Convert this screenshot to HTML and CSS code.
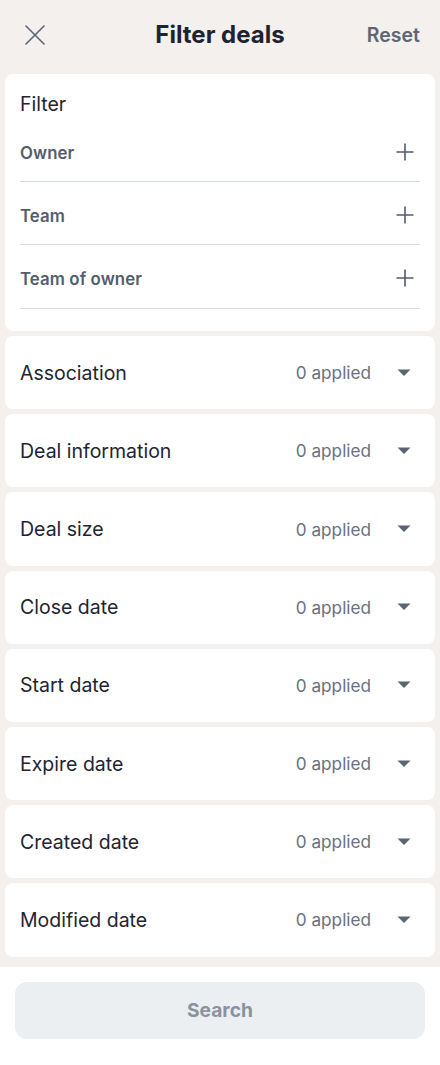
FILE: index.html
```html
<!DOCTYPE html>
<html lang="en">
<head>
<meta charset="utf-8">
<title>Filter deals</title>
<link rel="stylesheet" href="styles.css">
</head>
<body>
<div class="screen">
  <header class="topbar">
    <button class="icon-btn close" aria-label="Close">
      <svg width="20" height="20" viewBox="0 0 20 20"><path d="M1 1L19 19M19 1L1 19" stroke="#5b6472" stroke-width="1.6" stroke-linecap="round" fill="none"/></svg>
    </button>
    <h1 class="title">Filter deals</h1>
    <button class="reset">Reset</button>
  </header>

  <main class="content">
    <section class="card filter-card">
      <div class="filter-label">Filter</div>
      <div class="filter-row"><span>Owner</span><svg class="plus" width="18" height="18" viewBox="0 0 18 18"><path d="M9 0.5V17.5M0.5 9H17.5" stroke="#535c6b" stroke-width="1.6" fill="none"/></svg></div>
      <div class="filter-row"><span>Team</span><svg class="plus" width="18" height="18" viewBox="0 0 18 18"><path d="M9 0.5V17.5M0.5 9H17.5" stroke="#535c6b" stroke-width="1.6" fill="none"/></svg></div>
      <div class="filter-row"><span>Team of owner</span><svg class="plus" width="18" height="18" viewBox="0 0 18 18"><path d="M9 0.5V17.5M0.5 9H17.5" stroke="#535c6b" stroke-width="1.6" fill="none"/></svg></div>
    </section>

    <section class="card acc-row"><span class="acc-title">Association</span><span class="acc-count">0 applied</span><svg class="caret" width="14" height="8" viewBox="0 0 14 8"><path d="M0.5 0.5H13.5L7 7Z" fill="#5b6472"/></svg></section>
    <section class="card acc-row"><span class="acc-title">Deal information</span><span class="acc-count">0 applied</span><svg class="caret" width="14" height="8" viewBox="0 0 14 8"><path d="M0.5 0.5H13.5L7 7Z" fill="#5b6472"/></svg></section>
    <section class="card acc-row"><span class="acc-title">Deal size</span><span class="acc-count">0 applied</span><svg class="caret" width="14" height="8" viewBox="0 0 14 8"><path d="M0.5 0.5H13.5L7 7Z" fill="#5b6472"/></svg></section>
    <section class="card acc-row"><span class="acc-title">Close date</span><span class="acc-count">0 applied</span><svg class="caret" width="14" height="8" viewBox="0 0 14 8"><path d="M0.5 0.5H13.5L7 7Z" fill="#5b6472"/></svg></section>
    <section class="card acc-row"><span class="acc-title">Start date</span><span class="acc-count">0 applied</span><svg class="caret" width="14" height="8" viewBox="0 0 14 8"><path d="M0.5 0.5H13.5L7 7Z" fill="#5b6472"/></svg></section>
    <section class="card acc-row"><span class="acc-title">Expire date</span><span class="acc-count">0 applied</span><svg class="caret" width="14" height="8" viewBox="0 0 14 8"><path d="M0.5 0.5H13.5L7 7Z" fill="#5b6472"/></svg></section>
    <section class="card acc-row"><span class="acc-title">Created date</span><span class="acc-count">0 applied</span><svg class="caret" width="14" height="8" viewBox="0 0 14 8"><path d="M0.5 0.5H13.5L7 7Z" fill="#5b6472"/></svg></section>
    <section class="card acc-row"><span class="acc-title">Modified date</span><span class="acc-count">0 applied</span><svg class="caret" width="14" height="8" viewBox="0 0 14 8"><path d="M0.5 0.5H13.5L7 7Z" fill="#5b6472"/></svg></section>
  </main>

  <footer class="footer">
    <button class="search-btn">Search</button>
  </footer>
</div>
</body>
</html>
```

FILE: styles.css
```css
* { box-sizing: border-box; }
html, body { margin: 0; padding: 0; }
body {
  font-family: Inter, "Noto Sans", "Liberation Sans", sans-serif;
  background: #ffffff;
  color: #1e2430;
  width: 440px;
  min-height: 1065px;
}
button {
  font-family: inherit;
  border: none;
  background: none;
  padding: 0;
  cursor: pointer;
}
.screen {
  display: flex;
  flex-direction: column;
  min-height: 1065px;
}
.topbar {
  background: #f3f0ed;
  height: 70px;
  display: grid;
  grid-template-columns: 1fr auto 1fr;
  align-items: center;
  padding: 0 20px;
}
.icon-btn {
  justify-self: start;
  display: flex;
  width: 20px;
  height: 20px;
  margin-left: 5px;
}
.title {
  margin: 0;
  font-size: 24px;
  font-weight: 700;
  color: #1d2430;
  line-height: 30px;
}
.reset {
  justify-self: end;
  font-size: 19.5px;
  font-weight: 600;
  color: #5e6672;
  line-height: 24px;
}
.content {
  background: #f3f0ed;
  padding: 4px 5px 10px;
  display: flex;
  flex-direction: column;
  gap: 5px;
}
.card {
  background: #ffffff;
  border-radius: 8px;
}
.filter-card {
  padding: 18px 15px 22.5px;
}
.filter-label {
  font-size: 19.5px;
  line-height: 24px;
  color: #1e2430;
  margin-bottom: 3px;
}
.filter-row {
  height: 63.2px;
  padding-top: 23.5px;
  border-bottom: 1.5px solid #d5dbe2;
  display: flex;
  align-items: flex-start;
  justify-content: space-between;
  font-size: 16.8px;
  line-height: 20px;
  font-weight: 600;
  color: #545d6c;
  letter-spacing: 0.1px;
}
.plus {
  margin-right: 6px;
  margin-top: 0;
}
.acc-row {
  height: 73.2px;
  display: flex;
  align-items: center;
  padding: 0 24px 0 15px;
}
.acc-title {
  flex: 1;
  font-size: 19.5px;
  line-height: 24px;
  color: #1e2430;
}
.acc-count {
  font-size: 17.2px;
  color: #697180;
  margin-right: 26px;
}
.caret {
  display: block;
}
.footer {
  flex: 1;
  background: #ffffff;
  padding: 15px 15px 0;
}
.search-btn {
  width: 100%;
  height: 57px;
  border-radius: 12px;
  background: #eceff2;
  color: #8a929f;
  font-size: 19.2px;
  font-weight: 700;
}
```
